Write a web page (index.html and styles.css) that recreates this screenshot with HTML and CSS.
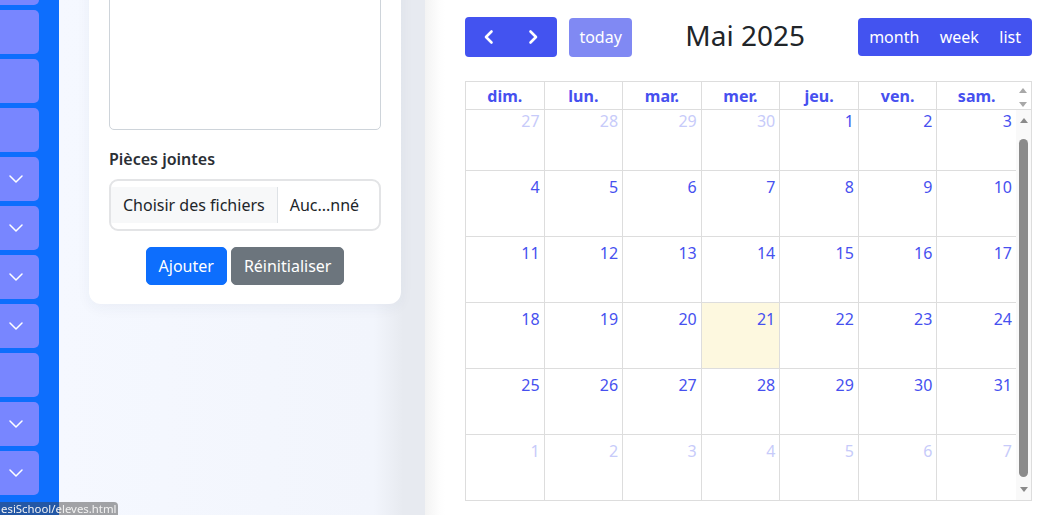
FILE: index.html
```html
<!DOCTYPE html>
<html lang="fr">
<head>
<meta charset="utf-8">
<title>Calendrier</title>
<link rel="stylesheet" href="styles.css">
</head>
<body>
<div class="app">
  <nav class="sidebar">
    <div class="nav-list">
      <div class="nav-item"></div>
      <div class="nav-item"></div>
      <div class="nav-item"></div>
      <div class="nav-item"></div>
      <div class="nav-item"><svg class="chev" width="14" height="8" viewBox="0 0 14 8"><path d="M1 1 L7 7 L13 1" /></svg></div>
      <div class="nav-item"><svg class="chev" width="14" height="8" viewBox="0 0 14 8"><path d="M1 1 L7 7 L13 1" /></svg></div>
      <div class="nav-item"><svg class="chev" width="14" height="8" viewBox="0 0 14 8"><path d="M1 1 L7 7 L13 1" /></svg></div>
      <div class="nav-item"><svg class="chev" width="14" height="8" viewBox="0 0 14 8"><path d="M1 1 L7 7 L13 1" /></svg></div>
      <div class="nav-item"></div>
      <div class="nav-item"><svg class="chev" width="14" height="8" viewBox="0 0 14 8"><path d="M1 1 L7 7 L13 1" /></svg></div>
      <div class="nav-item"><svg class="chev" width="14" height="8" viewBox="0 0 14 8"><path d="M1 1 L7 7 L13 1" /></svg></div>
    </div>
  </nav>

  <section class="form-col">
    <div class="card">
      <textarea class="form-textarea"></textarea>
      <label class="form-label">Pièces jointes</label>
      <div class="file-input">
        <span class="file-btn">Choisir des fichiers</span>
        <span class="file-name">Auc...nné</span>
      </div>
      <div class="actions">
        <button class="btn btn-primary">Ajouter</button>
        <button class="btn btn-secondary">Réinitialiser</button>
      </div>
    </div>
  </section>

  <section class="cal-col">
    <div class="toolbar">
      <div class="tb-chunk">
        <div class="nav-group">
          <button class="icon-btn icon-prev"><svg width="16" height="16" viewBox="0 0 16 16"><path d="M10.5 2.5 L5 8 L10.5 13.5" /></svg></button>
          <button class="icon-btn icon-next"><svg width="16" height="16" viewBox="0 0 16 16"><path d="M5.5 2.5 L11 8 L5.5 13.5" /></svg></button>
        </div>
        <button class="fc-btn fc-today">today</button>
      </div>
      <h2 class="cal-title">Mai 2025</h2>
      <div class="btn-group">
        <button class="fc-btn">month</button>
        <button class="fc-btn">week</button>
        <button class="fc-btn">list</button>
      </div>
    </div>

    <div class="cal-table">
      <div class="cal-head">
        <div class="dow">dim.</div>
        <div class="dow">lun.</div>
        <div class="dow">mar.</div>
        <div class="dow">mer.</div>
        <div class="dow">jeu.</div>
        <div class="dow">ven.</div>
        <div class="dow dow-last">sam.</div>
        <div class="head-gutter"><span class="tri-up light"></span><span class="tri-down light"></span></div>
      </div>
      <div class="cal-body">
        <div class="rows-viewport">
          <div class="rows">
            <div class="day other">27</div><div class="day other">28</div><div class="day other">29</div><div class="day other">30</div><div class="day">1</div><div class="day">2</div><div class="day last">3</div>
            <div class="day">4</div><div class="day">5</div><div class="day">6</div><div class="day">7</div><div class="day">8</div><div class="day">9</div><div class="day last">10</div>
            <div class="day">11</div><div class="day">12</div><div class="day">13</div><div class="day">14</div><div class="day">15</div><div class="day">16</div><div class="day last">17</div>
            <div class="day">18</div><div class="day">19</div><div class="day">20</div><div class="day today">21</div><div class="day">22</div><div class="day">23</div><div class="day last">24</div>
            <div class="day">25</div><div class="day">26</div><div class="day">27</div><div class="day">28</div><div class="day">29</div><div class="day">30</div><div class="day last">31</div>
            <div class="day other">1</div><div class="day other">2</div><div class="day other">3</div><div class="day other">4</div><div class="day other">5</div><div class="day other">6</div><div class="day other last">7</div>
          </div>
        </div>
        <div class="body-gutter">
          <span class="sb-btn"><span class="tri-up"></span></span>
          <span class="sb-thumb"></span>
          <span class="sb-btn sb-bottom"><span class="tri-down"></span></span>
        </div>
      </div>
    </div>
  </section>
</div>
<div class="statusbar">esiSchool/eleves.html</div>
</body>
</html>
```
FILE: styles.css
```css
* { box-sizing: border-box; }

body {
  margin: 0;
  height: 515px;
  overflow: hidden;
  font-family: "Noto Sans", "Open Sans", "Liberation Sans", sans-serif;
  background: #f5f8ff;
  color: #212529;
}

.app {
  display: flex;
  height: 515px;
}

/* Sidebar */
.sidebar {
  width: 59px;
  flex: none;
  background: #0d6efd;
  overflow: hidden;
}
.nav-list {
  display: flex;
  flex-direction: column;
  gap: 5px;
  margin-top: -39px;
}
.nav-item {
  height: 44px;
  width: 47px;
  margin-left: -8px;
  background: #7886ff;
  border-radius: 5px;
  display: flex;
  align-items: center;
  justify-content: center;
  padding-left: 1px;
}
.chev path {
  fill: none;
  stroke: #fff;
  stroke-width: 1.5;
  stroke-linecap: round;
  stroke-linejoin: round;
}

/* Form column */
.form-col {
  width: 366px;
  flex: none;
  padding: 0 24px 0 30px;
  background: linear-gradient(90deg, #f5f8ff 0%, #f2f5fc 86%, #e7eaf0 94%, #e7eaf0 100%);
}
.card {
  margin-top: -40px;
  background: #fff;
  border-radius: 12px;
  padding: 20px 20px 19px;
  box-shadow: 0 4px 14px rgba(40, 50, 90, 0.05);
}
.form-textarea {
  display: block;
  width: 100%;
  height: 150px;
  border: 1px solid #ced4da;
  border-radius: 5px;
  resize: none;
  margin: 0 0 17px;
  background: #fff;
}
.form-label {
  display: block;
  font-size: 16px;
  font-weight: 600;
  line-height: 24px;
  margin-bottom: 8px;
  color: #2b2f35;
}
.file-input {
  display: flex;
  align-items: stretch;
  border: 2px solid #e3e4e6;
  border-radius: 9px;
  padding: 6px 0;
  font-size: 16px;
  line-height: 36px;
  overflow: hidden;
}
.file-btn {
  background: #f7f8f9;
  padding: 0 12px;
  border-right: 1px solid #dee2e6;
  white-space: nowrap;
}
.file-name {
  padding-left: 12px;
  white-space: nowrap;
}
.actions {
  display: flex;
  justify-content: center;
  gap: 4px;
  margin-top: 16px;
}
.btn {
  font-family: inherit;
  font-size: 16px;
  line-height: 24px;
  padding: 6px 12px;
  border: 1px solid transparent;
  border-radius: 5px;
  color: #fff;
}
.btn-primary { background: #0d6efd; border-color: #0d6efd; }
.btn-secondary { background: #6c757d; border-color: #6c757d; }

/* Calendar column */
.cal-col {
  flex: 1;
  min-width: 0;
  padding: 17px 15px 0 40px;
  background: linear-gradient(90deg, #f3f3f3 0, #fdfdfd 14px, #fff 20px);
}
.toolbar {
  display: flex;
  justify-content: space-between;
  align-items: center;
  height: 40px;
  margin-bottom: 24px;
}
.tb-chunk {
  display: flex;
  align-items: center;
  gap: 12px;
}
.nav-group {
  display: flex;
  background: #4353f0;
  border-radius: 4px;
}
.icon-btn {
  width: 46px;
  height: 40px;
  display: flex;
  align-items: center;
  justify-content: center;
  padding: 0;
  border: none;
  background: transparent;
}
.icon-btn path {
  fill: none;
  stroke: #fff;
  stroke-width: 2.6;
  stroke-linecap: round;
  stroke-linejoin: round;
}
.icon-prev { padding-left: 2px; }
.icon-next { padding-right: 2px; }

.btn-group { display: flex; }
.fc-btn {
  font-family: inherit;
  font-size: 16px;
  line-height: 24px;
  padding: 7px 10.2px;
  background: #4353f0;
  border: none;
  color: #fff;
  border-radius: 0;
}
.btn-group .fc-btn:first-child { border-radius: 4px 0 0 4px; padding-left: 11px; }
.btn-group .fc-btn:last-child { border-radius: 0 4px 4px 0; padding-right: 11px; }
.fc-today {
  background: #8089f3;
  border-radius: 4px;
  padding: 7px 10.4px 8px;
}
.cal-title {
  margin: 0 0 4px;
  font-size: 28px;
  font-weight: 400;
  line-height: 36px;
  color: #212529;
}

.cal-table {
  border: 1px solid #ddd;
}
.cal-head {
  display: grid;
  grid-template-columns: repeat(7, 1fr) 15px;
  border-bottom: 1px solid #ddd;
}
.dow {
  border-right: 1px solid #ddd;
  text-align: center;
  padding: 3px 4px 1px;
  line-height: 23px;
  font-size: 16px;
  font-weight: 700;
  color: #4650ef;
}
.dow-last { border-right: none; }
.head-gutter {
  display: flex;
  flex-direction: column;
  align-items: center;
  padding-top: 6px;
  gap: 9px;
}
.tri-up, .tri-down {
  display: block;
  width: 0;
  height: 0;
  border-left: 4px solid transparent;
  border-right: 4px solid transparent;
}
.tri-up { border-bottom: 5px solid #8a8a8a; }
.tri-down { border-top: 5px solid #8a8a8a; }
.tri-up.light { border-bottom-color: #a8a8a8; }
.tri-down.light { border-top-color: #a8a8a8; }

.cal-body {
  display: flex;
  height: 390px;
}
.rows-viewport {
  flex: 1;
  overflow: hidden;
}
.rows {
  margin-top: -5px;
  display: grid;
  grid-template-columns: repeat(7, 1fr);
  grid-auto-rows: 66px;
}
.day {
  border-right: 1px solid #ddd;
  border-bottom: 1px solid #ddd;
  text-align: right;
  padding: 4px 4px;
  font-size: 16px;
  line-height: 24px;
  color: #4650ef;
}
.day.last { border-right: none; }
.day.other { color: #c7cbfa; }
.day.today { background: #fdf8df; }

.body-gutter {
  width: 15px;
  flex: none;
  background: #f9f9f9;
  display: flex;
  flex-direction: column;
  align-items: center;
}
.sb-btn {
  height: 21px;
  display: flex;
  align-items: center;
  justify-content: center;
  flex: none;
}
.sb-thumb {
  width: 9px;
  height: 338px;
  margin-top: 8px;
  border-radius: 5px;
  background: #8b8b8b;
  flex: none;
}
.sb-bottom { margin-top: auto; height: 22px; }

/* Browser status bar overlay */
.statusbar {
  position: fixed;
  left: 0;
  bottom: 0;
  width: 118px;
  height: 13px;
  padding-left: 1px;
  background: rgba(60, 60, 60, 0.46);
  border-top-right-radius: 4px;
  color: #f2f2f2;
  font-family: "Noto Sans", "Liberation Sans", sans-serif;
  font-size: 11.4px;
  line-height: 13px;
  white-space: nowrap;
  overflow: hidden;
}
```
